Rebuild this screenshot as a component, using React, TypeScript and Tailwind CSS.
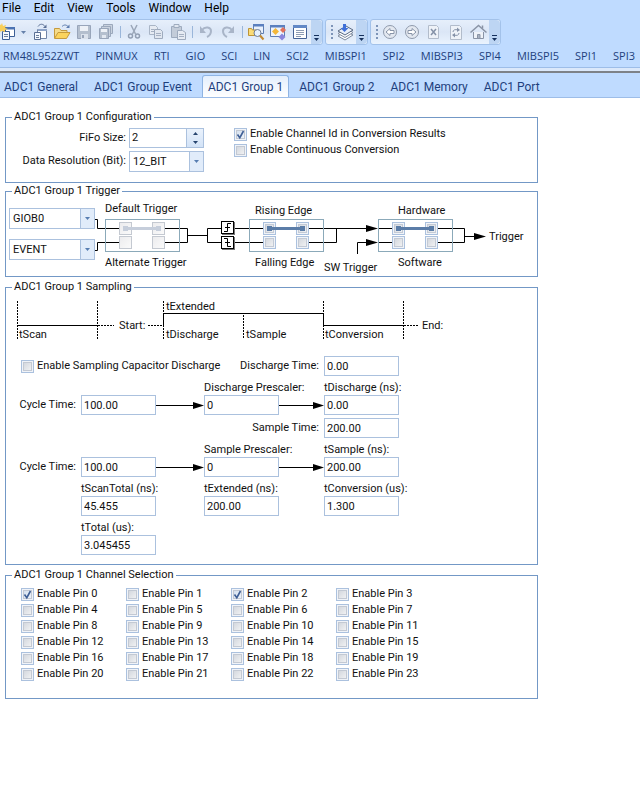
import { useState } from 'react';
import type { ReactNode } from 'react';

const menus = ['File', 'Edit', 'View', 'Tools', 'Window', 'Help'];

const devices = [
  'RM48L952ZWT', 'PINMUX', 'RTI', 'GIO', 'SCI', 'LIN', 'SCI2', 'MIBSPI1',
  'SPI2', 'MIBSPI3', 'SPI4', 'MIBSPI5', 'SPI1', 'SPI3',
];

const tabs = ['ADC1 General', 'ADC1 Group Event', 'ADC1 Group 1', 'ADC1 Group 2', 'ADC1 Memory', 'ADC1 Port'];

const pins = Array.from({ length: 24 }, (_, i) => i);

/* ---------- toolbar ---------- */

function ToolButton({ label, children }: { label: string; children: ReactNode }) {
  return (
    <button type="button" aria-label={label} className="flex h-full w-[22px] shrink-0 items-center justify-center">
      <svg width="18" height="18" viewBox="0 0 18 18" fill="none">
        {children}
      </svg>
    </button>
  );
}

function Separator() {
  return (
    <span className="flex w-1.5 shrink-0 justify-center">
      <span className="my-1.5 w-px bg-[#9ab6da]" />
    </span>
  );
}

function Grip() {
  return (
    <span className="flex w-2 shrink-0 items-center justify-end">
      <svg width="3" height="16" viewBox="0 0 3 16" fill="#7d94b8">
        <rect x="0" y="1" width="2" height="2" />
        <rect x="0" y="5" width="2" height="2" />
        <rect x="0" y="9" width="2" height="2" />
        <rect x="0" y="13" width="2" height="2" />
      </svg>
    </span>
  );
}

function Overflow() {
  return (
    <button
      type="button"
      aria-label="Toolbar options"
      className="flex h-full w-[11px] shrink-0 items-end justify-center rounded-r-sm bg-[#bdd5f3] pb-0.5"
    >
      <svg width="7" height="7" viewBox="0 0 7 7">
        <path d="M1 0h5v1H1z" fill="#15305c" />
        <path d="M1 3h5L3.500 6z" fill="#15305c" />
      </svg>
    </button>
  );
}

function ToolGroup({ children, className = '' }: { children: ReactNode; className?: string }) {
  return (
    <div
      className={`flex h-[26px] items-stretch overflow-hidden rounded-r-[3px] border border-[#a3c2ea] bg-linear-to-b from-[#e6effb] via-[#dbe6f6] to-[#eaf3fe] ${className}`}
    >
      {children}
    </div>
  );
}

function Toolbar() {
  return (
    <div className="flex gap-0.5 overflow-hidden">
      <ToolGroup className="-ml-[5px]">
        <ToolButton label="New project">
          <path d="M7.500 4.500h9v9h-9z" fill="#fff" stroke="#3c5f96" />
          <path d="M7 4h10v2.500H7z" fill="#4b73b3" />
          <path d="M4.500 8.500h7v8h-7z" fill="#f4f8ff" stroke="#3c5f96" />
          <path d="M6 11.500h4M6 13.500h4" stroke="#6d7f9a" />
          <path d="M4 0l1 3 3-1-1 3 3 1-3 1 0 2-3-1-3 1 1-3-2-1 2-1-1-3 2 1z" fill="#f8cf5a" />
        </ToolButton>
        <button type="button" aria-label="New options" className="flex w-[11px] shrink-0 items-center justify-center">
          <svg width="5" height="3" viewBox="0 0 5 3" fill="#6681aa">
            <path d="M0 0h5L2.500 3z" />
          </svg>
        </button>
        <ToolButton label="Add item">
          <path d="M6.500 6.500h9v9h-9z" fill="#fff" stroke="#7286a8" />
          <path d="M7 6h9v2H7z" fill="#8ea4c9" />
          <path d="M3.500 9.500h6v7h-6z" fill="#f4f8ff" stroke="#5a6f94" />
          <path d="M5 12.500h3M5 14.500h3" stroke="#6d7f9a" />
          <path d="M7 3.500c2-3 5-3 7 0" stroke="#5a6f94" />
          <path d="M15.500 1.500V5H12z" fill="#5a6f94" />
        </ToolButton>
        <ToolButton label="Open">
          <path d="M1.500 15V5.500h5l1.500 2h6v2.500" fill="#f6dc8a" stroke="#c59a3d" />
          <path d="M1.500 15.500L5 9.500h12l-3.500 6z" fill="#fbd35c" stroke="#c59a3d" />
          <path d="M9 3.500c2-2 4-2 6 0" stroke="#5d7cae" />
          <path d="M16.500 1.500V5H13z" fill="#5d7cae" />
        </ToolButton>
        <ToolButton label="Save">
          <path d="M2.500 2.500h13v13h-13z" fill="#b4bfce" stroke="#98a5ba" />
          <path d="M5 3h8v5H5z" fill="#edf1f7" />
          <path d="M6 11h7v5H6z" fill="#dbe2ec" />
          <path d="M7 12h2v3H7z" fill="#98a5ba" />
        </ToolButton>
        <ToolButton label="Save all">
          <path d="M6.500 1.500h9v9h-9z" fill="#c9d2df" stroke="#9ba8bc" />
          <path d="M4.500 3.500h9v10h-9z" fill="#c9d2df" stroke="#9ba8bc" />
          <path d="M2.500 5.500h9v10h-9z" fill="#b4bfce" stroke="#98a5ba" />
          <path d="M4 6h6v3H4z" fill="#edf1f7" />
          <path d="M5 12h4v3H5z" fill="#e2e8f1" />
        </ToolButton>
        <Separator />
        <ToolButton label="Cut">
          <path d="M6 2l4.500 9M12 2L7.500 11" stroke="#9aa6b8" strokeWidth="1.500" />
          <circle cx="5.500" cy="13" r="2" stroke="#929fb3" strokeWidth="1.500" />
          <circle cx="12.500" cy="13" r="2" stroke="#929fb3" strokeWidth="1.500" />
        </ToolButton>
        <ToolButton label="Copy">
          <path d="M2.500 2.500h6l2 2v7h-8z" fill="#e6ebf3" stroke="#a9b5c6" />
          <path d="M7.500 6.500h6l2 2v7h-8z" fill="#e1e7f0" stroke="#9eabbe" />
          <path d="M4 6.500h3M4 8.500h3M9 10.500h5M9 12.500h5" stroke="#a5b0c2" />
        </ToolButton>
        <ToolButton label="Paste">
          <path d="M2.500 3.500h10v11h-10z" fill="#c3ccd9" stroke="#9eabbe" />
          <path d="M5 1.500h5v3H5z" fill="#e1e7f0" stroke="#9eabbe" />
          <path d="M8.500 7.500h5l3 2v7h-8z" fill="#e6ebf3" stroke="#9eabbe" />
          <path d="M10 11.500h5M10 13.500h5" stroke="#a5b0c2" />
        </ToolButton>
        <Separator />
        <ToolButton label="Undo">
          <path d="M5 7c3-4 9-3 9 1 0 3-2 5-4 6" stroke="#a9b5c8" strokeWidth="2" />
          <path d="M3 3v7h6z" fill="#a9b5c8" />
        </ToolButton>
        <ToolButton label="Redo">
          <path d="M13 7c-3-4-9-3-9 1 0 3 2 5 4 6" stroke="#a9b5c8" strokeWidth="2" />
          <path d="M15 3v7H9z" fill="#a9b5c8" />
        </ToolButton>
        <Separator />
        <ToolButton label="Find in files">
          <path d="M6.500 1.500h10v9h-10z" fill="#e9f1fd" stroke="#5f7fb2" />
          <path d="M6 1h11v2.500H6z" fill="#5b80bf" />
          <path d="M1.500 5.500h3l1 1.500h4v5.500h-8z" fill="#fbdc78" stroke="#bd9437" />
          <circle cx="10.500" cy="10" r="3.500" fill="#e6f1fd" stroke="#6d7c95" />
          <path d="M13 12.500l3.500 4" stroke="#c48a2f" strokeWidth="2" />
        </ToolButton>
        <ToolButton label="Properties">
          <path d="M1.500 2.500h14v11h-14z" fill="#eef4fd" stroke="#5f7fb2" />
          <path d="M1 2h15v2.500H1z" fill="#5b80bf" />
          <path d="M6.500 5l3.500 3.500L6.500 12 3 8.500z" fill="#f3b83a" />
          <path d="M14 4l3 3-3 3-3-3z" fill="#e2715c" />
          <path d="M13 10.500l3.500 3.500-3.500 3.500L9.500 14z" fill="#8a86de" />
        </ToolButton>
        <ToolButton label="Output">
          <path d="M2.500 2.500h13v13h-13z" fill="#fff" stroke="#446296" />
          <path d="M2 2h14v3H2z" fill="#6288c6" />
          <path d="M5 7.500h8M5 9.500h8M5 11.500h8M5 13.500h5" stroke="#8d9cb4" />
        </ToolButton>
        <Overflow />
      </ToolGroup>

      <ToolGroup className="rounded-l-[3px]">
        <Grip />
        <ToolButton label="Generate code">
          <path d="M2 13l7 4 8-5-7-4z" fill="#fff" stroke="#7c899e" />
          <path d="M2 10.500l7 4 8-5-7-4z" fill="#fff" stroke="#7c899e" />
          <path d="M2 8l7 4 8-5-7-4z" fill="#e8effa" stroke="#5a6a83" />
          <path d="M7 1h3v4h2.500L8.500 9 4.500 5H7z" fill="#3f6fd8" />
        </ToolButton>
        <Overflow />
      </ToolGroup>

      <ToolGroup className="rounded-l-[3px]">
        <Grip />
        <ToolButton label="Back">
          <circle cx="9" cy="9" r="6.500" fill="#e3e8f0" stroke="#8f9aac" />
          <path d="M5 9l4-3.500v2h4v3H9v2z" fill="#fff" stroke="#8894a8" />
        </ToolButton>
        <ToolButton label="Forward">
          <circle cx="9" cy="9" r="6.500" fill="#e3e8f0" stroke="#8f9aac" />
          <path d="M13 9L9 5.500v2H5v3h4v2z" fill="#fff" stroke="#8894a8" />
        </ToolButton>
        <ToolButton label="Stop">
          <path d="M3.500 2.500h8l2 2v11h-10z" fill="#eef2f8" stroke="#b2bccb" />
          <path d="M6 6l5 6M11 6l-5 6" stroke="#8592a8" strokeWidth="1.500" />
        </ToolButton>
        <ToolButton label="Refresh">
          <path d="M3.500 2.500h9l2 2v12h-11z" fill="#eef2f8" stroke="#b2bccb" />
          <path d="M6 9c0-2 2-3 5-2M12 10c0 2-2 3-5 2" stroke="#8592a8" />
          <path d="M10 4.500l3 2.500-3 2zM8 10l-3 2 3 2.500z" fill="#8592a8" />
        </ToolButton>
        <ToolButton label="Home">
          <path d="M4.500 9v6.500h10V9" fill="#eef2f8" stroke="#8a94a6" />
          <path d="M1.500 9.500l8-7 8 7" stroke="#8a94a6" strokeWidth="1.500" />
          <path d="M13.500 2.500v3" stroke="#8a94a6" strokeWidth="1.500" />
          <path d="M8.500 11.500h2.500v4H8.500z" fill="#a9b3c3" stroke="#8a94a6" />
        </ToolButton>
        <Overflow />
      </ToolGroup>
    </div>
  );
}

/* ---------- form controls ---------- */

function CheckBox({ label, checked = false }: { label: string; checked?: boolean }) {
  return (
    <label className="flex h-4 items-center gap-[3px] leading-4 whitespace-nowrap">
      <span className="relative flex">
        <input
          type="checkbox"
          defaultChecked={checked}
          className="peer size-[13px] appearance-none border border-[#abc1de] bg-linear-to-br from-[#ccd1d9] to-[#f8f8f8] shadow-[inset_0_0_0_1px_#f0f3f8,inset_0_0_0_2px_#c3c9d3] checked:from-[#cfdcec] checked:to-[#f4f8fd]"
        />
        <svg
          className="pointer-events-none absolute inset-0 hidden peer-checked:block"
          width="13"
          height="13"
          viewBox="0 0 13 13"
          fill="none"
        >
          <path d="M3.500 6.500l2.300 3.200L9.500 3" stroke="#3f5f96" strokeWidth="1.600" />
        </svg>
      </span>
      {label}
    </label>
  );
}

function DropDown({ label, id, options }: { label?: string; id: string; options: string[] }) {
  return (
    <div className="relative">
      <select
        id={id}
        aria-label={label}
        className="block h-[21px] w-full appearance-none border border-[#abc1de] bg-white pr-4 pl-[3px] outline-none"
      >
        {options.map((o) => (
          <option key={o}>{o}</option>
        ))}
      </select>
      <span className="pointer-events-none absolute inset-y-px right-px flex w-3.5 items-center justify-center border-l border-[#abc1de] bg-[#e1ecfa]">
        <svg width="5" height="3" viewBox="0 0 5 3" fill="#567db1">
          <path d="M0 0h5L2.500 3z" />
        </svg>
      </span>
    </div>
  );
}

function Field({ id, value, className = '' }: { id: string; value: string; className?: string }) {
  return (
    <input
      id={id}
      type="text"
      defaultValue={value}
      className={`h-5 w-full border border-[#abc1de] bg-white px-0.5 outline-none ${className}`}
    />
  );
}

function Group({ title, className = '', children }: { title: string; className?: string; children: ReactNode }) {
  return (
    <fieldset className={`border border-[#7398c6] ${className}`}>
      <legend className="ml-1.5 px-0.5 leading-[14px]">{title}</legend>
      {children}
    </fieldset>
  );
}

/* ---------- trigger diagram ---------- */

function Switch({ name, disabled = false, className }: { name: string; disabled?: boolean; className: string }) {
  return (
    <div
      className={`absolute top-[21px] grid h-[33px] w-[75px] grid-cols-[13px_13px] content-start gap-x-5 gap-y-px border border-[#8ba9b9] pt-0.5 pl-[13px] ${className}`}
    >
      {['upper left', 'upper right', 'lower left', 'lower right'].map((pos) => (
        <button
          key={pos}
          type="button"
          disabled={disabled}
          aria-label={`${name} ${pos}`}
          className="size-[13px] border border-[#abc1de] bg-linear-to-br from-[#ccd1d9] to-[#f8f8f8] shadow-[inset_0_0_0_1px_#f0f3f8,inset_0_0_0_2px_#c3cad5] disabled:border-[#c4c9d1] disabled:from-[#ececee] disabled:to-[#fafafa] disabled:shadow-none"
        />
      ))}
      <svg
        className="pointer-events-none absolute top-0.5 left-[13px]"
        width="46"
        height="13"
        viewBox="0 0 46 13"
        fill={disabled ? '#c6cedb' : '#5b7da8'}
      >
        <rect x="4" y="4" width="5" height="5" />
        <rect x="37" y="4" width="5" height="5" />
        <rect x="6" y="5" width="34" height="3" />
      </svg>
    </div>
  );
}

function EdgeButton({ name, d, className }: { name: string; d: string; className: string }) {
  return (
    <button
      type="button"
      aria-label={name}
      className={`absolute left-[126px] size-[13px] border border-black bg-white shadow-[1px_1px_0_#777] ${className}`}
    >
      <svg width="11" height="11" viewBox="0 0 11 11" fill="none" stroke="#000">
        <path d={d} />
      </svg>
    </button>
  );
}

function TriggerDiagram() {
  return (
    <div className="relative h-[78px] flex-1 whitespace-nowrap">
      <svg className="absolute top-0 left-0" width="400" height="78" viewBox="0 0 400 78" fill="none" stroke="#000">
        <path d="M0 21.500h2.500v9H24M0 52.500h2.500v-8H24" />
        <path d="M70 30.500h22.500v14H70M92.500 37.500h20M126 30.500h-13.500v14H126" />
        <path d="M140 30.500h28M140 44.500h28" />
        <path d="M214 30.500h60M214 44.500h27.500v-14" />
        <path d="M262.500 56v-11.500h12" />
        <path d="M283 30.500h14M283 44.500h14M343 30.500h26.500v14H343M369.500 38.500h12" />
        <path d="M271 27l12 3.500-12 3.500zM271 41l12 3.500-12 3.500zM379 35l12 3.500-12 3.500z" fill="#000" stroke="none" />
      </svg>
      <Switch name="Trigger source" disabled className="left-[10px]" />
      <Switch name="Edge" className="left-[154px]" />
      <Switch name="Trigger mode" className="left-[283px]" />
      <EdgeButton name="Rising edge" className="top-[23px]" d="M2 9.500h3.500v-8H9M3 5.500h5" />
      <EdgeButton name="Falling edge" className="top-[38px]" d="M2 1.500h3.500v8H9M3 5.500h5" />
      <span className="absolute top-1 left-[10px]">Default Trigger</span>
      <span className="absolute top-[58px] left-[10px]">Alternate Trigger</span>
      <span className="absolute top-1.5 left-40">Rising Edge</span>
      <span className="absolute top-[58px] left-40">Falling Edge</span>
      <span className="absolute top-1.5 left-[303px]">Hardware</span>
      <span className="absolute top-[58px] left-[303px]">Software</span>
      <span className="absolute top-[63px] left-[229px]">SW Trigger</span>
      <span className="absolute top-8 left-[394px]">Trigger</span>
    </div>
  );
}

/* ---------- sampling ---------- */

function TimingDiagram() {
  return (
    <div className="relative h-[62px] whitespace-nowrap">
      <svg className="absolute top-0 left-0" width="430" height="50" viewBox="0 0 430 50" fill="none" stroke="#000">
        <path d="M11.500 31.500h80M157.500 32v-12.500h160v12h80" />
        <path
          d="M11.500 7v38M91.500 7v38M157.500 7v38M237.500 21v24M317.500 7v38M397.500 7v38M92 31.500h16M142 31.500h15M398 31.500h15"
          strokeDasharray="2 1"
        />
      </svg>
      <span className="absolute top-[34px] left-[13px]">tScan</span>
      <span className="absolute top-[25px] left-[113px]">Start:</span>
      <span className="absolute top-1.5 left-40">tExtended</span>
      <span className="absolute top-[34px] left-40">tDischarge</span>
      <span className="absolute top-[34px] left-60">tSample</span>
      <span className="absolute top-[34px] left-[319px]">tConversion</span>
      <span className="absolute top-[25px] left-[416px]">End:</span>
    </div>
  );
}

function Arrow() {
  return (
    <span className="flex h-5 items-center">
      <span className="h-px flex-1 bg-black" />
      <svg width="11" height="7" viewBox="0 0 11 7">
        <path d="M0 0l11 3.500L0 7z" />
      </svg>
    </span>
  );
}

function Caption({ htmlFor, className = '', children }: { htmlFor: string; className?: string; children: ReactNode }) {
  return (
    <label htmlFor={htmlFor} className={`h-[19px] pt-[5px] whitespace-nowrap ${className}`}>
      {children}
    </label>
  );
}

function SideLabel({ htmlFor, className = '', children }: { htmlFor: string; className?: string; children: ReactNode }) {
  return (
    <label htmlFor={htmlFor} className={`pr-[5px] text-right leading-5 whitespace-nowrap ${className}`}>
      {children}
    </label>
  );
}

function SamplingForm() {
  return (
    <div className="grid grid-cols-[75px_75px_48px_75px_45px_75px] pb-[9px]">
      <div className="col-span-3 pt-0.5 pl-[15px]">
        <CheckBox label="Enable Sampling Capacitor Discharge" />
      </div>
      <SideLabel htmlFor="discharge-time" className="col-span-2">Discharge Time:</SideLabel>
      <Field id="discharge-time" value="0.00" />

      <Caption htmlFor="discharge-prescaler" className="col-start-4">Discharge Prescaler:</Caption>
      <Caption htmlFor="t-discharge" className="col-start-6">tDischarge (ns):</Caption>

      <SideLabel htmlFor="discharge-cycle">Cycle Time:</SideLabel>
      <Field id="discharge-cycle" value="100.00" />
      <Arrow />
      <Field id="discharge-prescaler" value="0" />
      <Arrow />
      <Field id="t-discharge" value="0.00" />

      <SideLabel htmlFor="sample-time" className="col-span-2 col-start-4 pt-[3px]">Sample Time:</SideLabel>
      <Field id="sample-time" value="200.00" className="mt-[3px]" />

      <Caption htmlFor="sample-prescaler" className="col-start-4">Sample Prescaler:</Caption>
      <Caption htmlFor="t-sample" className="col-start-6">tSample (ns):</Caption>

      <SideLabel htmlFor="sample-cycle">Cycle Time:</SideLabel>
      <Field id="sample-cycle" value="100.00" />
      <Arrow />
      <Field id="sample-prescaler" value="0" />
      <Arrow />
      <Field id="t-sample" value="200.00" />

      <Caption htmlFor="scan-total" className="col-start-2">tScanTotal (ns):</Caption>
      <Caption htmlFor="t-extended" className="col-start-4">tExtended (ns):</Caption>
      <Caption htmlFor="t-conversion" className="col-start-6">tConversion (us):</Caption>
      <Field id="scan-total" value="45.455" className="col-start-2" />
      <Field id="t-extended" value="200.00" className="col-start-4" />
      <Field id="t-conversion" value="1.300" className="col-start-6" />

      <Caption htmlFor="t-total" className="col-start-2">tTotal (us):</Caption>
      <Field id="t-total" value="3.045455" className="col-start-2" />
    </div>
  );
}

function FifoSize() {
  const [size, setSize] = useState(2);
  return (
    <div className="flex h-5 border border-[#abc1de] bg-white">
      <input
        id="fifo"
        type="text"
        value={size}
        onChange={(e) => setSize(Number(e.target.value) || 0)}
        className="w-full min-w-0 flex-1 px-0.5 outline-none"
      />
      <span className="flex w-[17px] shrink-0 flex-col border-l border-[#abc1de] bg-linear-to-b from-[#eaf2fc] to-[#d3e3f7]">
        <button type="button" aria-label="Increase" onClick={() => setSize(size + 1)} className="flex flex-1 items-center justify-center">
          <svg width="5" height="3" viewBox="0 0 5 3" fill="#27456f"><path d="M0 3h5L2.500 0z" /></svg>
        </button>
        <button type="button" aria-label="Decrease" onClick={() => setSize(size - 1)} className="flex flex-1 items-center justify-center">
          <svg width="5" height="3" viewBox="0 0 5 3" fill="#27456f"><path d="M0 0h5L2.500 3z" /></svg>
        </button>
      </span>
    </div>
  );
}

export default function App() {
  const [active, setActive] = useState('ADC1 Group 1');

  return (
    <div className="min-h-screen overflow-hidden bg-white font-['Roboto','Liberation_Sans',sans-serif] text-[11px] leading-[14px] text-[#111]">
      <header className="bg-[#bfdbff] text-[12px] whitespace-nowrap">
        <nav className="flex h-[19px] items-start gap-[13px] pl-0.5 leading-4 text-black">
          {menus.map((m) => (
            <button key={m} type="button">{m}</button>
          ))}
        </nav>
        <Toolbar />
        <nav className="flex h-[22px] items-center gap-4 pl-[3px] font-['Open_Sans','Noto_Sans',sans-serif] text-[11px] text-[#1e3f7d]">
          {devices.map((d) => (
            <button key={d} type="button">{d}</button>
          ))}
        </nav>
        <div className="h-1.5 border-t border-b-2 border-t-[#9dbde8] border-b-[#7d8288] bg-[#dbe8fa]" />
        <div role="tablist" className="-ml-0.5 flex h-[25px] items-end gap-1 border-b border-[#9dbde8] text-[#1e3f7d]">
          {tabs.map((t) => (
            <button
              key={t}
              type="button"
              role="tab"
              aria-selected={t === active}
              onClick={() => setActive(t)}
              className="h-[22px] rounded-t-[3px] border border-b-0 border-transparent px-[5px] aria-selected:border-[#8fb4e3] aria-selected:bg-linear-to-b aria-selected:from-[#e3eefc] aria-selected:to-white"
            >
              {t}
            </button>
          ))}
        </div>
      </header>

      <main className="max-w-[543px] px-[5px] pt-3">
        <Group title="ADC1 Group 1 Configuration" className="pb-2.5">
          <div className="flex items-start gap-[30px]">
            <div className="grid grid-cols-[123px_75px] gap-y-[3px] pt-1">
              <label htmlFor="fifo" className="pr-[3px] text-right leading-5">FiFo Size:</label>
              <FifoSize />
              <label htmlFor="resolution" className="pr-[3px] text-right leading-5">Data Resolution (Bit):</label>
              <DropDown id="resolution" options={['12_BIT', '10_BIT', '8_BIT']} />
            </div>
            <div className="pt-0.5">
              <CheckBox label="Enable Channel Id in Conversion Results" checked />
              <CheckBox label="Enable Continuous Conversion" />
            </div>
          </div>
        </Group>

        <Group title="ADC1 Group 1 Trigger" className="mt-px">
          <div className="flex">
            <div className="flex w-[89px] shrink-0 flex-col gap-2.5 pt-2.5 pl-[3px]">
              <DropDown id="source" label="Default trigger source" options={['GIOB0', 'GIOB1']} />
              <DropDown id="alternate" label="Alternate trigger source" options={['EVENT', 'GIOB0']} />
            </div>
            <TriggerDiagram />
          </div>
        </Group>

        <Group title="ADC1 Group 1 Sampling" className="mt-[3px]">
          <TimingDiagram />
          <SamplingForm />
        </Group>

        <Group title="ADC1 Group 1 Channel Selection" className="mt-[3px] pb-4">
          <div className="grid grid-cols-[repeat(4,105px)] pt-1 pl-[15px]">
            {pins.map((n) => (
              <CheckBox key={n} label={`Enable Pin ${n}`} checked={n === 0 || n === 2} />
            ))}
          </div>
        </Group>
      </main>
    </div>
  );
}
